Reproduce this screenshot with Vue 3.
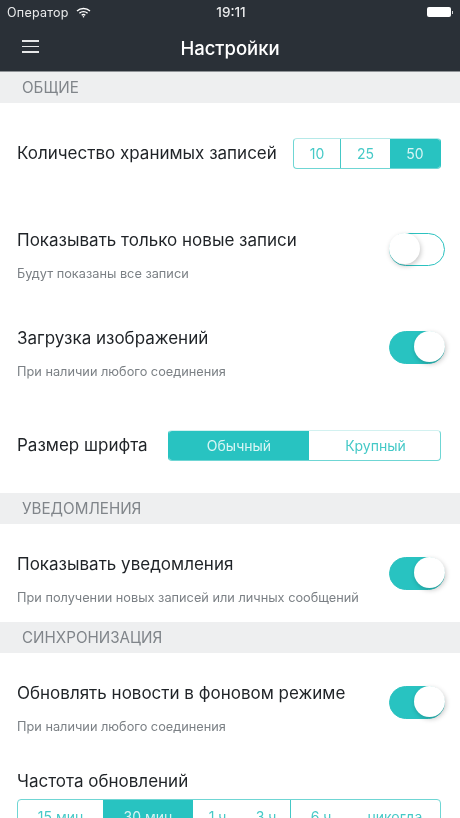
<script setup>
const count = [
  { t: '10', w: 46 },
  { t: '25', w: 50 },
  { t: '50', w: 49, on: true },
]
const size = [
  { t: 'Обычный', on: true, w: 140 },
  { t: 'Крупный', w: 133 },
]
const freq = [
  { t: '15 мин', w: 85 },
  { t: '30 мин', w: 90, on: true },
  { t: '1 ч', w: 49 },
  { t: '3 ч', w: 49 },
  { t: '6 ч', w: 60 },
  { t: 'никогда', w: 88 },
]
</script>

<template>
  <div class="app">
    <header class="head">
      <div class="status">
        <div class="status-left">
          <span class="carrier">Оператор</span>
          <svg class="wifi" width="15" height="11" viewBox="0 0 15 11" fill="none" stroke="#fff">
            <path d="M1 4a9.5 9.5 0 0 1 13 0" stroke-width="1.4" />
            <path d="M3.4 6.2a6 6 0 0 1 8.2 0" stroke-width="1.4" />
            <path d="M5.7 8.2a2.8 2.8 0 0 1 3.6 0" stroke-width="1.4" />
            <circle cx="7.5" cy="9.8" r=".8" fill="#fff" stroke="none" />
          </svg>
        </div>
        <span class="clock">19:11</span>
        <div class="battery"><i></i><b></b></div>
      </div>
      <div class="nav">
        <div class="burger"><i></i><i></i><i></i></div>
        <h1>Настройки</h1>
      </div>
    </header>

    <div class="section">ОБЩИЕ</div>

    <div class="row row-count">
      <span class="label">Количество хранимых записей</span>
      <div class="seg seg-count">
        <span
          v-for="o in count"
          :key="o.t"
          class="opt"
          :class="{ on: o.on }"
          :style="{ width: o.w + 'px' }"
        >{{ o.t }}</span>
      </div>
    </div>

    <div class="row row-new">
      <div class="texts">
        <span class="label">Показывать только новые записи</span>
        <span class="sub">Будут показаны все записи</span>
      </div>
      <div class="toggle"><i></i></div>
    </div>

    <div class="row row-img">
      <div class="texts">
        <span class="label">Загрузка изображений</span>
        <span class="sub">При наличии любого соединения</span>
      </div>
      <div class="toggle on"><i></i></div>
    </div>

    <div class="row row-size">
      <span class="label">Размер шрифта</span>
      <div class="seg seg-size">
        <span
          v-for="o in size"
          :key="o.t"
          class="opt"
          :class="{ on: o.on }"
          :style="{ width: o.w + 'px' }"
        >{{ o.t }}</span>
      </div>
    </div>

    <div class="section">УВЕДОМЛЕНИЯ</div>

    <div class="row row-notify">
      <div class="texts">
        <span class="label">Показывать уведомления</span>
        <span class="sub">При получении новых записей или личных сообщений</span>
      </div>
      <div class="toggle on"><i></i></div>
    </div>

    <div class="section">СИНХРОНИЗАЦИЯ</div>

    <div class="row row-sync">
      <div class="texts">
        <span class="label">Обновлять новости в фоновом режиме</span>
        <span class="sub">При наличии любого соединения</span>
      </div>
      <div class="toggle on"><i></i></div>
    </div>

    <div class="freq">
      <span class="label">Частота обновлений</span>
      <div class="seg seg-freq">
        <span
          v-for="o in freq"
          :key="o.t"
          class="opt"
          :class="{ on: o.on }"
          :style="{ width: o.w + 'px' }"
        >{{ o.t }}</span>
      </div>
    </div>
  </div>
</template>

<style>
html, body { margin: 0; background: #fff; overflow: hidden; }
</style>

<style scoped>
.app {
  width: 460px;
  height: 818px;
  overflow: hidden;
  background: #fff;
  font-family: Inter, "Noto Sans", sans-serif;
  color: #22262a;
  filter: blur(.35px);
}
.head {
  height: 71px;
  background: #2a3037;
  border-bottom: 1px solid #8f9397;
  color: #fff;
  display: flex;
  flex-direction: column;
}
.status {
  height: 24px;
  padding: 0 7px;
  display: grid;
  grid-template-columns: 1fr auto 1fr;
  align-items: center;
  font-size: 12.5px;
  color: #e9eaeb;
}
.carrier { letter-spacing: .25px; }
.status-left { display: flex; align-items: center; gap: 7px; }
.clock { font-size: 13.5px; font-weight: 500; margin-left: 2px; }
.battery { justify-self: end; display: flex; align-items: center; gap: 1px; }
.battery i { width: 24px; height: 10px; border-radius: 2px; background: #fff; }
.battery b { width: 1px; height: 3px; background: #cfd0d2; }
.nav {
  flex: 1;
  position: relative;
  display: flex;
  align-items: center;
  justify-content: center;
}
.nav h1 {
  margin: 0;
  font-size: 18.5px;
  font-weight: 500;
}
.burger {
  position: absolute;
  left: 22px;
  top: 16px;
  width: 17px;
  display: flex;
  flex-direction: column;
  gap: 4px;
}
.burger i { height: 1.5px; background: #e6e7e8; }
.section {
  height: 31px;
  padding-left: 22px;
  background: #eeeff0;
  display: flex;
  align-items: center;
  font-size: 15.2px;
  color: #80858a;
}
.row {
  display: flex;
  justify-content: space-between;
  padding: 0 15px 0 17px;
}
.row-count { height: 100px; align-items: center; padding-right: 19px; }
.row-new { height: 98px; }
.row-img { height: 98px; }
.row-size { height: 94px; padding-right: 19px; align-items: flex-start; }
.row-notify { height: 98px; }
.row-sync { height: 98px; }
.label { font-size: 17px; line-height: 20px; color: #1f2327; white-space: nowrap; }
.sub { font-size: 12.75px; line-height: 14px; color: #7b8085; white-space: nowrap; }
.texts { display: flex; flex-direction: column; gap: 17px; padding-top: 27px; }
.row-notify .texts, .row-sync .texts { padding-top: 30px; }
.toggle {
  margin-top: 30px;
  width: 56px;
  height: 33px;
  box-sizing: border-box;
  border: 1.5px solid #2cc2c0;
  border-radius: 17px;
  background: #fff;
  position: relative;
}
.row-notify .toggle, .row-sync .toggle { margin-top: 33px; }
.toggle i {
  position: absolute;
  left: -1px;
  top: -1px;
  width: 31px;
  height: 31px;
  border-radius: 50%;
  background: #fff;
  box-shadow: 1px 2px 5px rgba(0, 0, 0, .22);
}
.toggle.on { background: #28c3c1; }
.toggle.on i { left: auto; right: -1px; }
.row-size .label { margin-top: 36px; }
.seg {
  display: flex;
  box-sizing: border-box;
  border: 1.5px solid #6fd6d4;
  border-radius: 4px;
  overflow: hidden;
  color: #45c9c7;
  font-size: 14px;
}
.opt {
  display: flex;
  align-items: center;
  justify-content: center;
  box-sizing: border-box;
  flex: none;
}
.opt.on { background: #28c3c1; color: #d8f5f4; }
.seg-count { height: 31px; width: 148px; border-top-color: #b5e9e8; border-right-color: #28c3c1; }
.seg-count .opt:nth-child(2) { border-left: 1.5px solid #45c8c6; }
.seg-count .opt.on { flex: 1; }
.seg-size { margin-top: 31px; height: 31px; width: 273px; border-top-color: #d2f1f0; border-left-color: #28c3c1; }
.freq {
  padding: 20px 19px 0 17px;
  display: flex;
  flex-direction: column;
  gap: 8px;
}
.seg-freq { height: 34px; width: 424px; flex: none; }
.seg-freq .opt:nth-child(4) { border-right: 1.5px solid #45c8c6; }
</style>
